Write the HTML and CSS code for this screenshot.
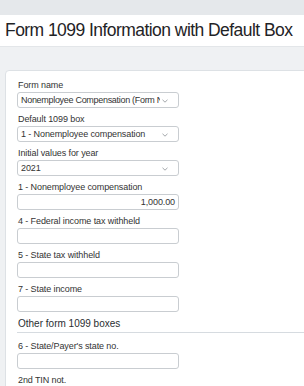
FILE: index.html
```html
<!DOCTYPE html>
<html>
<head>
<meta charset="utf-8">
<link rel="stylesheet" href="styles.css">
</head>
<body>
<div class="page">
  <div class="topbar"></div>
  <header class="titlebar"><h1>Form 1099 Information with Default Box</h1></header>
  <div class="content">
    <section class="card">
      <div class="field">
        <label>Form name</label>
        <div class="select"><span class="tight">Nonemployee Compensation (Form N</span><svg viewBox="0 0 6 4" class="chev"><path d="M0.5 0.8 L3 3.2 L5.5 0.8" fill="none" stroke="#8a8f94" stroke-width="0.8"/></svg></div>
      </div>
      <div class="field">
        <label>Default 1099 box</label>
        <div class="select"><span>1 - Nonemployee compensation</span><svg viewBox="0 0 6 4" class="chev"><path d="M0.5 0.8 L3 3.2 L5.5 0.8" fill="none" stroke="#8a8f94" stroke-width="0.8"/></svg></div>
      </div>
      <div class="field">
        <label>Initial values for year</label>
        <div class="select"><span>2021</span><svg viewBox="0 0 6 4" class="chev"><path d="M0.5 0.8 L3 3.2 L5.5 0.8" fill="none" stroke="#8a8f94" stroke-width="0.8"/></svg></div>
      </div>
      <div class="field">
        <label>1 - Nonemployee compensation</label>
        <div class="input num">1,000.00</div>
      </div>
      <div class="field">
        <label>4 - Federal income tax withheld</label>
        <div class="input"></div>
      </div>
      <div class="field">
        <label>5 - State tax withheld</label>
        <div class="input"></div>
      </div>
      <div class="field">
        <label>7 - State income</label>
        <div class="input"></div>
      </div>
      <h2 class="section">Other form 1099 boxes</h2>
      <div class="field">
        <label>6 - State/Payer's state no.</label>
        <div class="input"></div>
      </div>
      <div class="field">
        <label>2nd TIN not.</label>
      </div>
    </section>
  </div>
</div>
</body>
</html>
```
FILE: styles.css
```css
html, body {
  margin: 0;
  padding: 0;
}
body {
  background: #eff1f3;
  font-family: "Liberation Sans", Arial, sans-serif;
  color: #333;
}
.page {
  width: 304px;
  height: 386px;
  overflow: hidden;
}
.topbar {
  height: 15px;
  background: #e5e8eb;
}
.titlebar {
  background: #fff;
  height: 31px;
  border-bottom: 1px solid #e3e6e9;
}
.titlebar h1 {
  margin: 0;
  padding: 5px 0 0 5px;
  font-size: 17.5px;
  line-height: 21px;
  font-weight: normal;
  letter-spacing: -0.55px;
  color: #1f2326;
  white-space: nowrap;
}
.content {
  padding: 23px 0 0 5px;
}
.card {
  width: 330px;
  background: #fff;
  border: 1px solid #dde1e5;
  border-radius: 4px;
  padding: 8px 0 0 11px;
  height: 400px;
  box-sizing: border-box;
}
.field {
  width: 162px;
  margin-bottom: 5px;
}
.field label {
  display: block;
  font-size: 9px;
  line-height: 12px;
  letter-spacing: -0.1px;
  color: #333;
  padding-left: 1px;
  margin-bottom: 1px;
  white-space: nowrap;
}
.select, .input {
  height: 16px;
  box-sizing: border-box;
  border: 1px solid #c9cdd1;
  border-radius: 3px;
  background: #fff;
  font-size: 9px;
  line-height: 14px;
  letter-spacing: -0.1px;
  color: #333;
  padding: 0 3px;
  display: flex;
  align-items: center;
}
.select span {
  flex: 1;
  overflow: hidden;
  white-space: nowrap;
  min-width: 0;
}
.select span.tight {
  letter-spacing: -0.3px;
}
.chev {
  width: 6px;
  height: 4px;
  margin: 1px 7px 0 2px;
  flex: none;
}
.input.num {
  justify-content: flex-end;
}
.section {
  margin: 4px 0 7px 0;
  padding: 0 0 1px 1px;
  font-size: 10px;
  line-height: 14px;
  font-weight: normal;
  color: #2a2e31;
  border-bottom: 1px solid #d6dbe0;
}
```
